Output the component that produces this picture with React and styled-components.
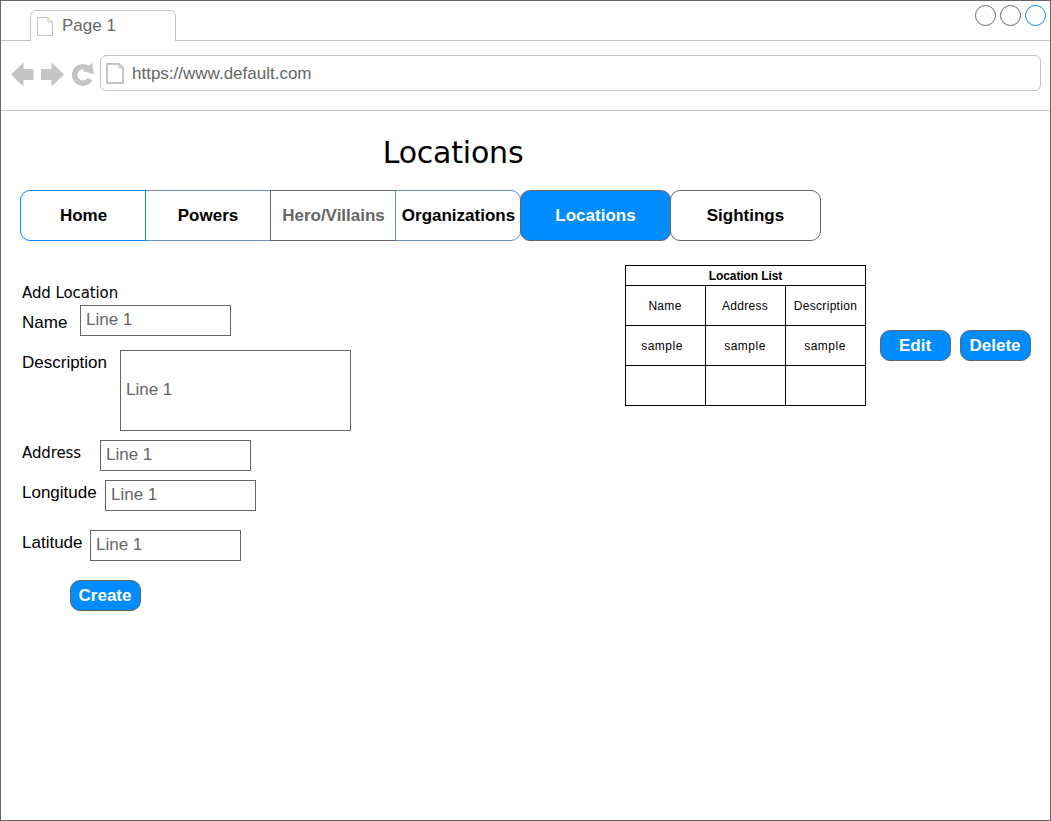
import React from 'react';
import styled, { createGlobalStyle, css } from 'styled-components';

const ink = '#666666';
const line = '#c4c4c4';
const blue = '#008cff';
const slate = '#6c8ebf';
const sans = '"Liberation Sans", Arial, sans-serif';
const wide = '"DejaVu Sans", Verdana, sans-serif';

const GlobalStyle = createGlobalStyle`
  * { box-sizing: border-box; }
  body { margin: 0; background: #fff; font: 17px/20px ${sans}; color: #000; }
  button, input { font: inherit; }
`;

const BrowserWindow = styled.div`
  width: 1051px;
  height: 821px;
  border: 1px solid ${ink};
  overflow: hidden;
`;

const TabStrip = styled.header`
  height: 40px;
  display: flex;
  align-items: flex-end;
  border-bottom: 1px solid ${line};
`;

const Tab = styled.div`
  width: 146px;
  height: 31px;
  margin: 0 0 -1px 29px;
  padding: 0 0 0 6px;
  display: flex;
  align-items: center;
  gap: 9px;
  border: 1px solid ${line};
  border-bottom: 0;
  border-radius: 6px 6px 0 0;
  background: #fff;
  color: ${ink};
  svg { margin-top: 1px; }
`;

const WindowControls = styled.div`
  display: flex;
  gap: 4px;
  align-self: flex-start;
  margin: 4px 4px 0 auto;
`;

const Control = styled.span`
  width: 21px;
  height: 21px;
  border: 1px solid ${(p) => (p.$active ? blue : ink)};
  border-radius: 50%;
`;

const AddressRow = styled.div`
  height: 70px;
  padding: 14px 9px 0 10px;
  display: flex;
  border-bottom: 1px solid ${line};
`;

const NavIcons = styled.svg`
  width: 89px;
  height: 36px;
  flex: none;
  fill: ${line};
`;

const AddressBar = styled.div`
  flex: 1;
  height: 36px;
  padding: 0 0 0 5px;
  display: flex;
  align-items: center;
  gap: 8px;
  border: 1px solid ${line};
  border-radius: 6px;
  color: ${ink};
`;

const Url = styled.span`
  padding-top: 2px;
`;

const Page = styled.main`
  padding: 24px 19px 0;
`;

const Title = styled.h1`
  width: 866px;
  margin: 0;
  font: 30px/36px ${wide};
  letter-spacing: -0.2px;
  text-align: center;
`;

const Menu = styled.nav`
  display: flex;
  margin-top: 19px;
`;

const MenuItem = styled.a`
  width: ${(p) => p.$width}px;
  height: 51px;
  padding-left: ${(p) => p.$nudge || 0}px;
  display: flex;
  align-items: center;
  justify-content: center;
  white-space: nowrap;
  font-weight: bold;
  border: 1px solid ${(p) => p.$border};
  border-radius: ${(p) => p.$radius || 0};
  color: ${(p) => p.$color || '#000'};
  background: ${(p) => p.$fill || 'transparent'};
  &:first-child { z-index: 1; }
  & + & { margin-left: -1px; }
`;

const Columns = styled.div`
  display: flex;
  align-items: flex-start;
`;

const Form = styled.form`
  width: 605px;
  padding: 42px 0 0 2px;
`;

const compact = css`
  font: 15px/20px ${wide};
  letter-spacing: -0.1px;
`;

const FormTitle = styled.div`
  ${compact}
  height: 22px;
`;

const Row = styled.div`
  display: flex;
  align-items: flex-start;
  margin-bottom: ${(p) => p.$after}px;
`;

const Label = styled.label`
  width: ${(p) => p.$width}px;
  padding-top: ${(p) => p.$drop || 3}px;
  ${(p) => p.$wide && compact}
`;

const Field = styled.div`
  width: ${(p) => p.$width || 151}px;
  height: ${(p) => p.$height || 31}px;
  padding: 0 5px 2px;
  display: flex;
  align-items: center;
  border: 1px solid ${ink};
  color: ${ink};
`;

const Button = styled.button`
  width: 71px;
  height: 31px;
  padding: 0 1px 0 0;
  border: 1px solid ${ink};
  border-radius: 10px;
  background: ${blue};
  color: #fff;
  font-weight: bold;
  margin-left: ${(p) => p.$indent || 0}px;
`;

const List = styled.table`
  width: 241px;
  margin-top: 24px;
  border-collapse: collapse;
  table-layout: fixed;
  font-size: 12px;
  line-height: 14px;
  text-align: center;
  th, td { border: 1px solid #000; padding: 0; }
  th { height: 20px; letter-spacing: -0.1px; }
`;

const Cell = styled.td`
  height: 40px;
  letter-spacing: ${(p) => (p.$loose ? 0.5 : 0.3)}px;
  span { margin-right: ${(p) => p.$shift ?? 1}px; }
`;

const Actions = styled.div`
  display: flex;
  gap: 9px;
  margin: 89px 0 0 14px;
`;

const PageIcon = ({ w, h, stroke }) => {
  const o = stroke / 2;
  return (
    <svg width={w} height={h} viewBox={`0 0 ${w} ${h}`} fill="none" stroke={line} strokeWidth={stroke}>
      <path d={`M${o} ${o}H${w - 5}L${w - o} 5V${h - o}H${o}Z`} />
      <path d={`M${w - 5} ${o}V5H${w - o}`} strokeWidth="1" />
    </svg>
  );
};

const menu = [
  { label: 'Home', width: 126, border: blue, radius: '10px 0 0 10px', nudge: 1 },
  { label: 'Powers', width: 126, border: slate },
  { label: 'Hero/Villains', width: 126, border: ink, color: ink, nudge: 1 },
  { label: 'Organizations', width: 126, border: slate, radius: '0 10px 10px 0', nudge: 1 },
  { label: 'Locations', width: 151, border: ink, radius: '10px', color: '#fff', fill: blue },
  { label: 'Sightings', width: 151, border: ink, radius: '10px' },
];

export default function App() {
  return (
    <BrowserWindow>
      <GlobalStyle />
      <TabStrip>
        <Tab><PageIcon w={16} h={19} stroke={1} />Page 1</Tab>
        <WindowControls><Control /><Control /><Control $active /></WindowControls>
      </TabStrip>
      <AddressRow>
        <NavIcons viewBox="11 55 89 36">
          <path d="M11 74.5L23.5 62.5V69H33.5V80H23.5V86.5Z" />
          <path d="M64 74.5L51.5 62.5V69H41V80H51.5V86.5Z" />
          <path d="M88.5 69A8.2 8.2 0 1 0 90 79" fill="none" stroke={line} strokeWidth="5.5" />
          <path d="M92 63L94 74.3L82.5 71Z" />
        </NavIcons>
        <AddressBar><PageIcon w={18} h={21} stroke={2} /><Url>https://www.default.com</Url></AddressBar>
      </AddressRow>
      <Page>
        <Title>Locations</Title>
        <Menu>
          {menu.map((m) => (
            <MenuItem key={m.label} $width={m.width} $border={m.border} $radius={m.radius} $color={m.color} $fill={m.fill} $nudge={m.nudge}>
              {m.label}
            </MenuItem>
          ))}
        </Menu>
        <Columns>
          <Form>
            <FormTitle>Add Location</FormTitle>
            <Row $after={14}><Label $width={58} $drop={8}>Name</Label><Field>Line 1</Field></Row>
            <Row $after={9}><Label $width={98}>Description</Label><Field $width={231} $height={81}>Line 1</Field></Row>
            <Row $after={9}><Label $width={78} $wide>Address</Label><Field>Line 1</Field></Row>
            <Row $after={19}><Label $width={83}>Longitude</Label><Field>Line 1</Field></Row>
            <Row $after={19}><Label $width={68}>Latitude</Label><Field>Line 1</Field></Row>
            <Button type="button" $indent={48}>Create</Button>
          </Form>
          <List>
            <tbody>
              <tr><th colSpan={3}>Location List</th></tr>
              <tr><Cell><span>Name</span></Cell><Cell><span>Address</span></Cell><Cell $shift={0}><span>Description</span></Cell></tr>
              <tr><Cell $loose $shift={7}><span>sample</span></Cell><Cell $loose><span>sample</span></Cell><Cell $loose><span>sample</span></Cell></tr>
              <tr><Cell /><Cell /><Cell /></tr>
            </tbody>
          </List>
          <Actions><Button>Edit</Button><Button>Delete</Button></Actions>
        </Columns>
      </Page>
    </BrowserWindow>
  );
}
